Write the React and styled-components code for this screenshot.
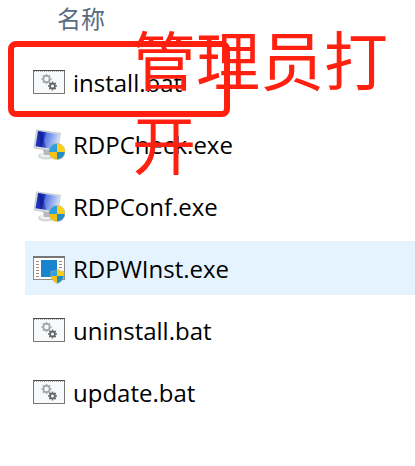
import styled, { createGlobalStyle } from 'styled-components';

const files = [
  { name: 'install.bat', type: 'batch', marked: true },
  { name: 'RDPCheck.exe', type: 'monitor' },
  { name: 'RDPConf.exe', type: 'monitor' },
  { name: 'RDPWInst.exe', type: 'installer', hovered: true },
  { name: 'uninstall.bat', type: 'batch' },
  { name: 'update.bat', type: 'batch' },
];

const teeth = [0, 45, 90, 135, 180, 225, 270, 315];

function Gear({ x, y, r, color }) {
  return (
    <g transform={`translate(${x} ${y})`}>
      <circle r={r} fill="none" stroke={color} strokeWidth="1.7" />
      {teeth.map((angle) => (
        <rect
          key={angle}
          x="-0.8"
          y={-r - 2}
          width="1.6"
          height="1.8"
          fill={color}
          transform={`rotate(${angle})`}
        />
      ))}
    </g>
  );
}

function Shield({ round }) {
  const outline = round
    ? 'M24 14.5C28.5 14.5 32 17.8 32 22.4C32 27 28.5 30.4 24 30.4C19.5 30.4 16 27 16 22.4C16 17.8 19.5 14.5 24 14.5Z'
    : 'M24.5 16Q27.5 18.5 31 18.5V22.5Q31 27.5 24.5 30.5Q18 27.5 18 22.5V18.5Q21.5 18.5 24.5 16Z';
  const id = round ? 'shield-round' : 'shield';

  return (
    <>
      <clipPath id={id}>
        <path d={outline} />
      </clipPath>
      <g clipPath={`url(#${id})`}>
        <rect x="16" y="14" width="8" height="9" fill="#2e9fdc" />
        <rect x="24" y="14" width="8" height="9" fill="#fbd016" />
        <rect x="16" y="23" width="8" height="9" fill="#f5c211" />
        <rect x="24" y="23" width="8" height="9" fill="#238ccb" />
      </g>
      <path d={outline} fill="none" stroke="#b9b28a" strokeWidth="0.6" />
    </>
  );
}

function BatchIcon() {
  return (
    <StyledIcon viewBox="0 0 32 32" aria-hidden="true">
      <rect x="0.5" y="3.5" width="31" height="23" fill="#f8f9fa" stroke="#777" />
      <path d="M0 3.5H32" stroke="#4d4d4d" />
      <path d="M1 4.5H31" stroke="#aaa" strokeDasharray="1 1" />
      <Gear x={13.5} y={12} r={3.1} color="#a5a8ab" />
      <Gear x={19.5} y={19} r={2.4} color="#63676b" />
    </StyledIcon>
  );
}

function MonitorIcon() {
  return (
    <StyledIcon viewBox="0 0 32 32" aria-hidden="true">
      <defs>
        <linearGradient id="screen" x1="0" y1="0" x2="1" y2="0.2">
          <stop offset="0" stopColor="#2338bd" />
          <stop offset="0.38" stopColor="#1a2cb4" />
          <stop offset="0.48" stopColor="#5a78e4" />
          <stop offset="1" stopColor="#c3d3fa" />
        </linearGradient>
      </defs>
      <ellipse cx="13" cy="27" rx="8" ry="3.6" fill="#d5d8da" />
      <ellipse cx="13" cy="26" rx="6" ry="2.3" fill="#eef0f1" />
      <path d="M10 20L17 21V26H11Z" fill="#b4b9bd" />
      <path d="M3.5 0.8L27.5 4.2L24.2 23L1 19Z" fill="#d8dfe4" stroke="#aeb7be" strokeWidth="0.6" />
      <path d="M5 2L26 5.2L23 20.5L2.5 17.2Z" fill="url(#screen)" />
      <path d="M5 2L9 2.7L13 18.8L8 18Z" fill="#0d1480" opacity="0.45" />
      <Shield round />
    </StyledIcon>
  );
}

function InstallerIcon() {
  return (
    <StyledIcon viewBox="0 0 32 32" aria-hidden="true">
      <rect x="0.5" y="3.5" width="31" height="23" fill="#fff" stroke="#8a8a8a" />
      <path d="M0 4H32" stroke="#777" strokeWidth="2" />
      <rect x="8" y="7" width="16" height="17" fill="#1985ce" />
      <path
        d="M3 8.5H6M3 11.5H6M3 14.5H6M3 17.5H6M3 20.5H6M3 23.5H6M26 8.5H29M26 11.5H29M26 14.5H29"
        stroke="#a58678"
      />
      <Shield />
    </StyledIcon>
  );
}

const icons = {
  batch: BatchIcon,
  monitor: MonitorIcon,
  installer: InstallerIcon,
};

function FileRow({ file }) {
  const Icon = icons[file.type];

  return (
    <StyledRow $hovered={file.hovered}>
      <Icon />
      <StyledName>{file.name}</StyledName>
      {file.marked && (
        <>
          <StyledFrame />
          <StyledNote>管理员打开</StyledNote>
        </>
      )}
    </StyledRow>
  );
}

function App() {
  return (
    <>
      <GlobalStyle />
      <StyledPage>
        <StyledHeader>名称</StyledHeader>
        <StyledList>
          {files.map((file) => (
            <FileRow key={file.name} file={file} />
          ))}
        </StyledList>
      </StyledPage>
    </>
  );
}

export default App;

const GlobalStyle = createGlobalStyle`
  * {
    box-sizing: border-box;
  }

  body {
    margin: 0;
    background: #fff;
    color: #000;
    font-family: 'Open Sans', 'Noto Sans CJK SC', sans-serif;
  }
`;

const StyledPage = styled.main`
  padding-left: 25px;
`;

const StyledHeader = styled.h1`
  margin: 0;
  padding: 0 32px;
  color: #5a6c82;
  font-size: 24px;
  font-weight: 400;
  line-height: 38px;
`;

const StyledList = styled.ul`
  display: flex;
  flex-direction: column;
  gap: 8px;
  margin: 0;
  padding: 17px 0;
  list-style: none;
`;

const StyledRow = styled.li`
  position: relative;
  display: flex;
  align-items: center;
  gap: 8px;
  height: 54px;
  padding: 2px 8px 0;
  background: ${({ $hovered }) => ($hovered ? '#e5f3ff' : 'transparent')};
`;

const StyledIcon = styled.svg`
  flex: none;
  width: 32px;
  height: 32px;
`;

const StyledName = styled.span`
  font-size: 24px;
  line-height: 32px;
  white-space: nowrap;
`;

const StyledFrame = styled.div`
  position: absolute;
  top: -14px;
  left: -17px;
  z-index: 1;
  width: 222px;
  height: 76px;
  border: 6px solid #ff2010;
  border-radius: 8px;
`;

const StyledNote = styled.p`
  position: absolute;
  top: -36px;
  left: 107px;
  z-index: 2;
  width: 260px;
  margin: 0;
  color: #ff2010;
  font-size: 64px;
  line-height: 84px;
`;
